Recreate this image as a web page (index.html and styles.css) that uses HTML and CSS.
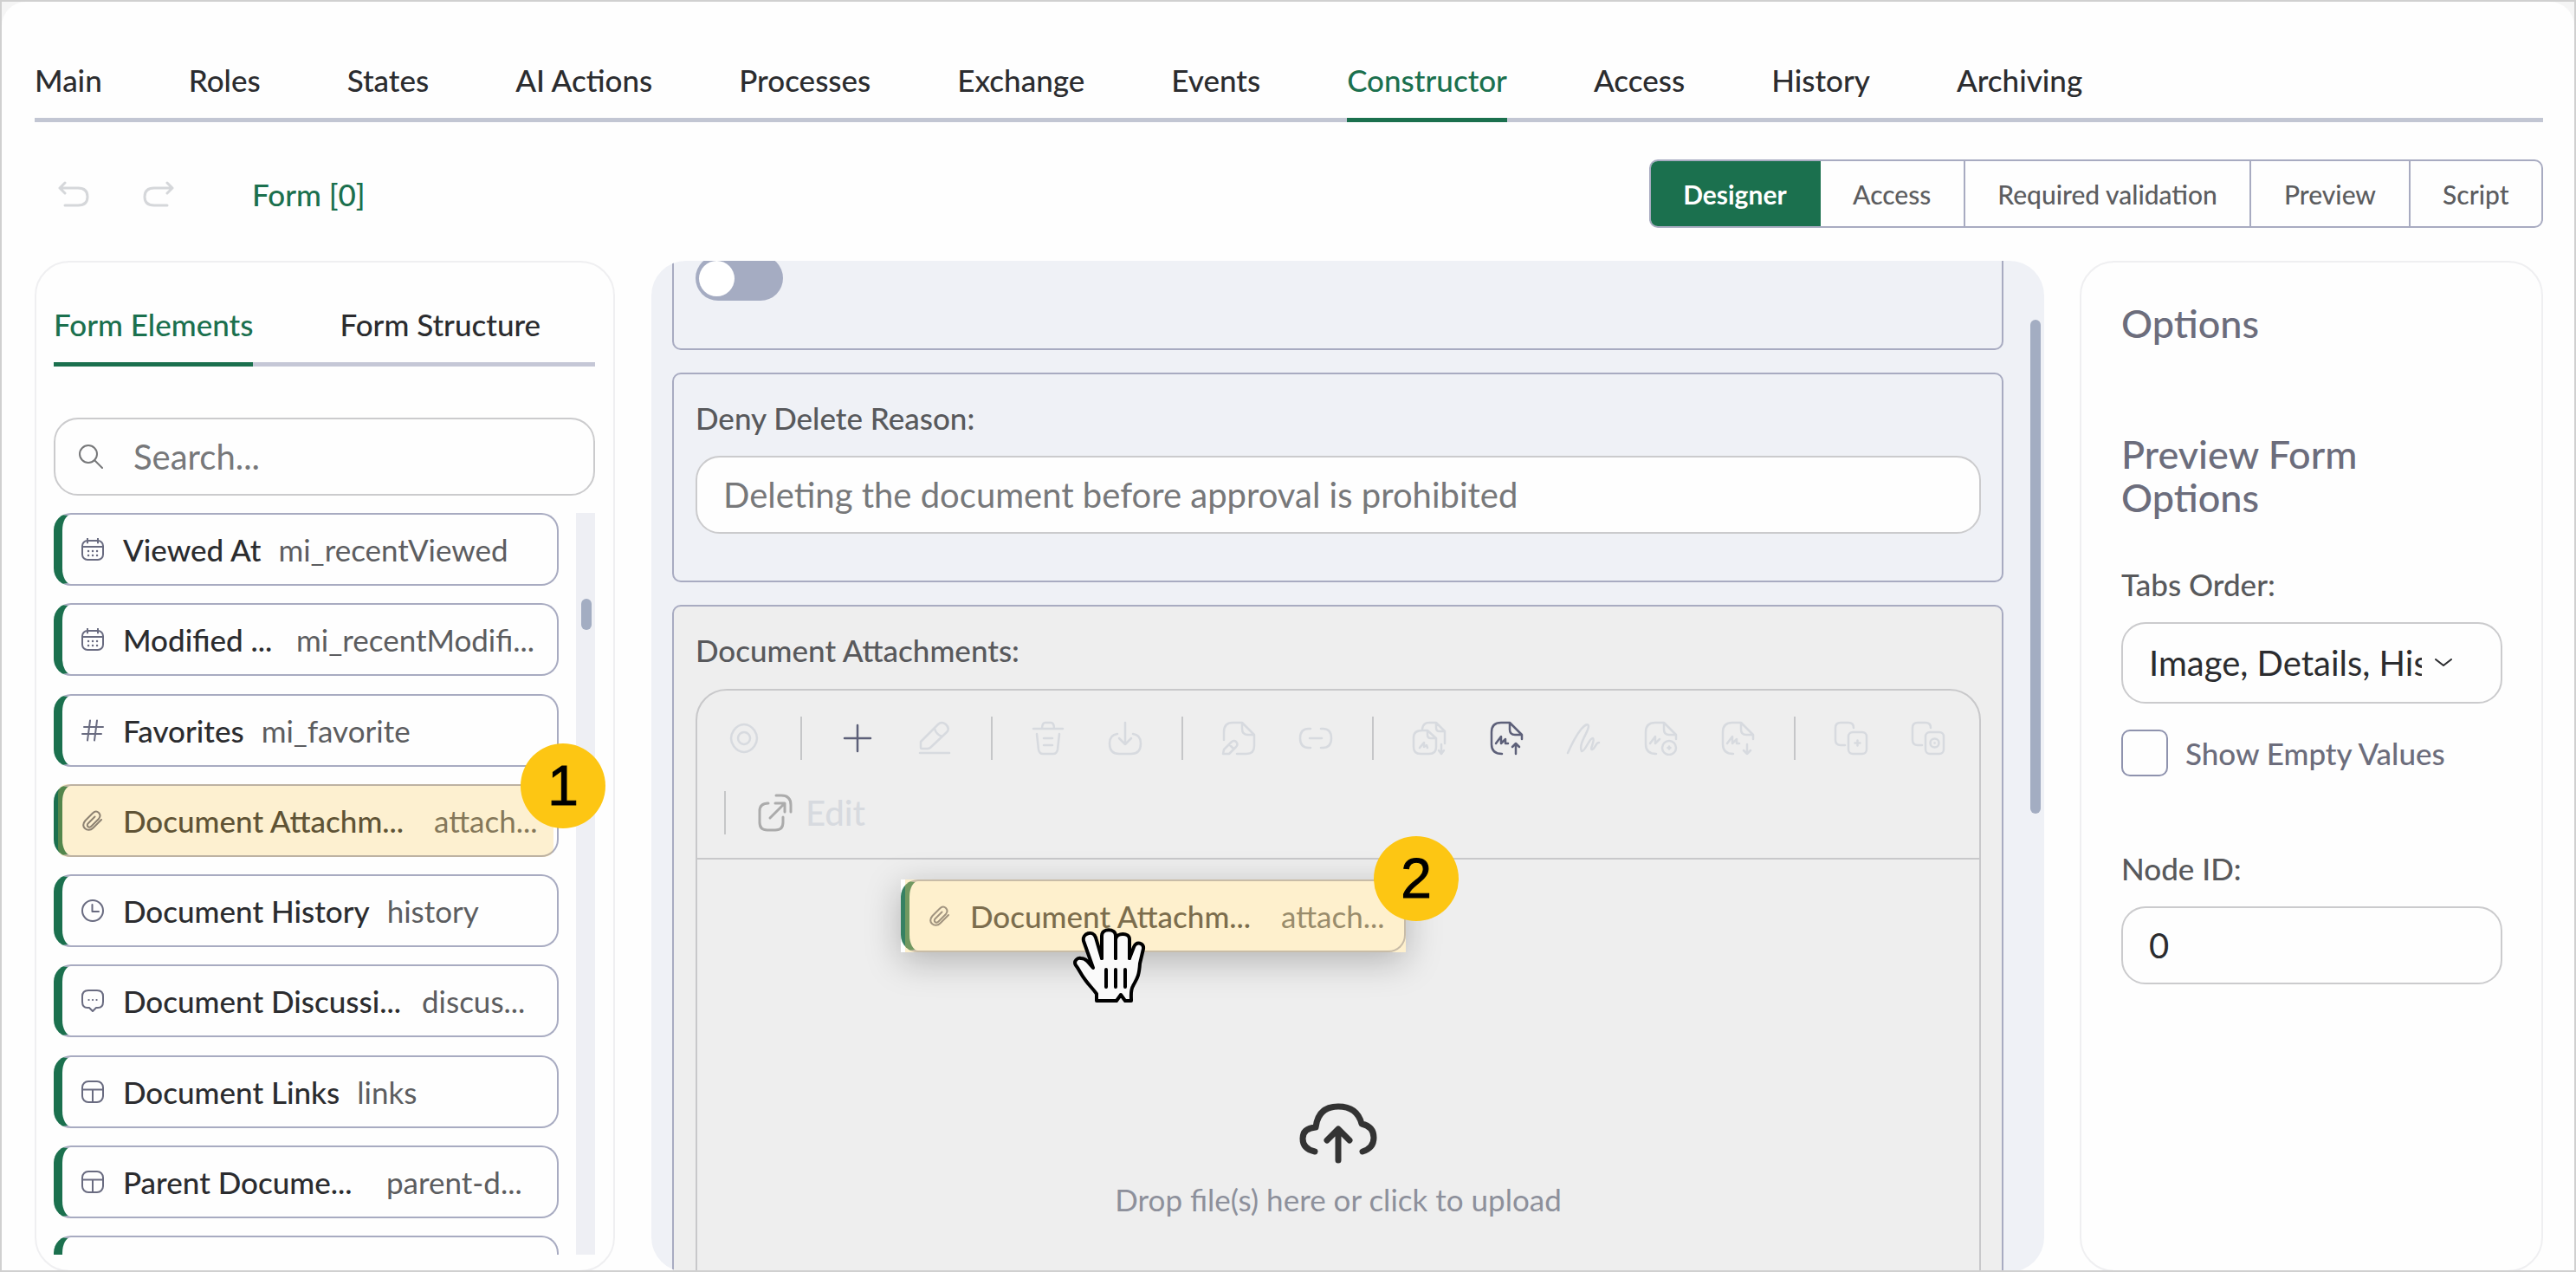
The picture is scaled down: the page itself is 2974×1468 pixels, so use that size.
FILE: index.html
```
<!DOCTYPE html>
<html lang="en">
<head>
    <meta charset="UTF-8">
    <meta name="viewport" content="width=device-width, initial-scale=1.0">
    <title>Constructor</title>
    <link rel="stylesheet" href="styles.css">
</head>
<body>
    <!-- shared icons -->
    <svg class="sprite">
        <symbol id="i-calendar" viewBox="0 0 26 26"><rect x="1" y="3" width="24" height="22" rx="6"/><path d="M1 10h24M7 .5v5M19 .5v5"/><path d="M8 15h.1M13 15h.1M18 15h.1M8 20h.1M13 20h.1M18 20h.1" stroke-width="2.4"/></symbol>
        <symbol id="i-hash" viewBox="0 0 26 26"><path d="M3 9h22M1 17h22M10 1.500L7 24.500M18 1.500l-3 23"/></symbol>
        <symbol id="i-clip" viewBox="0 0 26 26"><path d="M23 12l-9.500 9.500c-3 3-7 3-9.500.5s-2-6 .5-9L13 4.500c2.500-2.500 5-2.500 7-.5s2 4.500 0 7l-8.500 8.500c-1.500 1.500-3 1.500-4 .5s-1-2.500.5-4L15.500 8.500"/></symbol>
        <symbol id="i-clock" viewBox="0 0 26 26"><circle cx="13" cy="13" r="12"/><path d="M12.500 6v8H20"/></symbol>
        <symbol id="i-chat" viewBox="0 0 26 26"><path d="M8 1h10q7 0 7 7v6q0 7-6 7h-2l-4 4-4-4H7q-6 0-6-7V8q0-7 7-7z"/><path d="M8.500 12h.1M13 12h.1M17.500 12h.1" stroke-width="2.200"/></symbol>
        <symbol id="i-table" viewBox="0 0 26 26"><rect x="1" y="1" width="24" height="24" rx="7"/><path d="M1 10.500h24M13 10.500V25"/></symbol>
    </svg>

    <div class="page">
        <nav class="tabs">
            <a>Main</a>
            <a>Roles</a>
            <a>States</a>
            <a>AI Actions</a>
            <a>Processes</a>
            <a>Exchange</a>
            <a>Events</a>
            <a class="active">Constructor</a>
            <a>Access</a>
            <a>History</a>
            <a>Archiving</a>
        </nav>

        <div class="bar">
            <svg class="undo" viewBox="0 0 36 30"><path d="M8 2L2 8l6 6M2 8h21q11 0 11 10t-11 10H8"/></svg>
            <svg class="undo" viewBox="0 0 36 30"><path d="M28 2l6 6-6 6M34 8H13Q2 8 2 18t11 10h15"/></svg>
            <span class="crumb">Form [0]</span>
            <div class="modes">
                <button class="active">Designer</button>
                <button>Access</button>
                <button>Required validation</button>
                <button>Preview</button>
                <button>Script</button>
            </div>
        </div>

        <div class="columns">
            <aside class="panel elements">
                <nav class="tabs small">
                    <a class="active">Form Elements</a>
                    <a>Form Structure</a>
                </nav>
                <div class="search">
                    <svg viewBox="0 0 28 28"><circle cx="11" cy="11" r="10"/><path d="M18 18l9 9"/></svg>
                    <span>Search...</span>
                </div>
                <div class="list">
                    <div class="items">
                        <div class="item"><svg><use href="#i-calendar"/></svg><b>Viewed At</b><i>mi_recentViewed</i></div>
                        <div class="item"><svg><use href="#i-calendar"/></svg><b class="w-modified">Modified ...</b><i>mi_recentModifi...</i></div>
                        <div class="item"><svg><use href="#i-hash"/></svg><b>Favorites</b><i>mi_favorite</i></div>
                        <div class="item marked"><svg><use href="#i-clip"/></svg><b class="w-attach">Document Attachm...</b><i>attach...</i><span class="badge">1</span></div>
                        <div class="item"><svg><use href="#i-clock"/></svg><b>Document History</b><i>history</i></div>
                        <div class="item"><svg><use href="#i-chat"/></svg><b class="w-discuss">Document Discussi...</b><i>discus...</i></div>
                        <div class="item"><svg><use href="#i-table"/></svg><b>Document Links</b><i>links</i></div>
                        <div class="item"><svg><use href="#i-table"/></svg><b class="w-parent">Parent Docume...</b><i>parent-d...</i></div>
                        <div class="item"></div>
                    </div>
                    <div class="track"><div class="thumb"></div></div>
                </div>
            </aside>

            <main class="canvas">
                <div class="fields">
                    <section class="field first">
                        <div class="toggle"></div>
                    </section>
                    <section class="field reason">
                        <label>Deny Delete Reason:</label>
                        <div class="input">Deleting the document before approval is prohibited</div>
                    </section>
                    <section class="field attachments">
                        <label>Document Attachments:</label>
                        <div class="files">
                            <div class="toolbar">
                                <svg class="tool" viewBox="0 0 40 40"><path d="M20 4q7 0 12 7 6 9 0 18-5 7-12 7T8 29q-6-9 0-18 5-7 12-7z"/><circle cx="20" cy="20" r="7"/></svg>
                                <span class="sep"></span>
                                <svg class="tool on" viewBox="0 0 40 40"><path d="M20 5v30M5 20h30"/></svg>
                                <svg class="tool" viewBox="0 0 40 40"><path d="M3 37h34M4 31V24L24 4q4-4 9 0 5 5 1 9L16 30q-2 2-4 2H5q-1 0-1-1M20 9q2 7 9 9"/></svg>
                                <span class="sep"></span>
                                <svg class="tool" viewBox="0 0 40 40"><path d="M3 9h34M13 9q0-7 4-7h6q4 0 4 7M7 15l2 18q1 5 5 5h12q4 0 5-5l2-18M15 20h10M15 28h10"/></svg>
                                <svg class="tool" viewBox="0 0 40 40"><path d="M20 2v25M13 20l7 7 7-7M11 15q-9 1-9 11 0 12 11 12h14q11 0 11-12 0-10-9-11"/></svg>
                                <span class="sep"></span>
                                <svg class="tool" viewBox="0 0 40 40"><path d="M3 22V13Q3 2 13 2h11l14 14v13q0 9-9 9H18M24 2v7q0 7 7 7h7M3 33l9-9q3-2 5 0 3 3 0 6l-8 8H2zM9 27l5 5"/></svg>
                                <svg class="tool" viewBox="0 0 40 40"><path d="M14 9h-2Q2 9 2 20t10 11h2M26 9h2q10 0 10 11T28 31h-2M13 20h14"/></svg>
                                <span class="sep"></span>
                                <svg class="tool" viewBox="0 0 40 40"><path d="M12 9q1-7 8-7h8l10 10v14M28 2v6q0 4 4 4h6M18 11h-6Q2 11 2 19v11q0 8 8 8h10q8 0 8-8V20zM18 11v5q0 4 4 4h6M9 31l5-6v5l3-2 1 3M34 27v10M31 34l3 4 3-4"/></svg>
                                <svg class="tool on" viewBox="0 0 40 40"><path d="M15 38Q3 38 3 27V13Q3 2 14 2h10l14 14v5M24 2v8q0 6 6 6h8M8 26l6-8v8l5-5v5h3M31 38V26M27 30l4-4 4 4"/></svg>
                                <svg class="tool" viewBox="0 0 40 40"><path d="M2 37Q10 19 17 10q8-9 9-4c0 7-12 20-8 29 4 1 9-16 13-15 3 2-4 13-1 13 4-1 4-8 8-8"/></svg>
                                <svg class="tool" viewBox="0 0 40 40"><path d="M15 38Q3 38 3 27V13Q3 2 14 2h10l14 14v5M24 2v8q0 6 6 6h8M8 26l6-8v8l5-5"/><circle cx="30" cy="31" r="8"/><path d="M30 29.500v3M28.500 31h3"/></svg>
                                <svg class="tool" viewBox="0 0 40 40"><path d="M15 38Q3 38 3 27V13Q3 2 14 2h10l14 14v5M24 2v8q0 6 6 6h8M8 26l6-8v8l5-5v5h3M31 27v11M27 34l4 4 4-4"/></svg>
                                <span class="sep"></span>
                                <svg class="tool" viewBox="0 0 40 40"><path d="M23 8q0-6-6-6H8Q2 2 2 8v14q0 6 6 6h5"/><rect x="17" y="13" width="21" height="25" rx="5"/><path d="M27.500 22.500v6M24.500 25.500h6"/></svg>
                                <svg class="tool" viewBox="0 0 40 40"><path d="M23 8q0-6-6-6H8Q2 2 2 8v14q0 6 6 6h5"/><rect x="17" y="13" width="21" height="25" rx="5"/><circle cx="27.500" cy="25.500" r="5"/><path d="M27.500 25.500h.1"/></svg>
                            </div>
                            <div class="toolbar second">
                                <span class="sep"></span>
                                <svg class="open" viewBox="0 0 40 44"><path d="M12 11q-10 0-10 9v13q0 9 9 9h9q9 0 9-9v-6M14 28l16-16M20 11h11v10M21 2h6q11 0 11 11v8"/></svg>
                                <span class="edit">Edit</span>
                            </div>
                            <div class="drop">
                                <svg class="cloud" viewBox="0 0 90 70"><path d="M18 56Q4 53 4 41 4 29 19 28 22 4 45 4q22 0 27 20 14 3 14 16 0 12-13 16M45 66V31M32 43l13-13 13 13"/></svg>
                                <p>Drop file(s) here or click to upload</p>
                            </div>

                            <div class="drag">
                                <div class="item marked"><svg><use href="#i-clip"/></svg><b class="w-attach">Document Attachm...</b><i>attach...</i></div>
                                <span class="badge">2</span>
                                <svg class="hand" viewBox="0 0 86 88">
                                    <path d="M28 84v-8C23 69 20 67 15 60 9 52 8 48 4 43 1 38 6 34 10 35q4 0 7 3l7 8L13 15c-2-9 11-13 14-4l7 24V9c0-9 16-9 16 0v26V13c1-8 16-8 16 0v22l5-13c3-7 12-5 11 2l-4 17c-1 16-4 18-8 26-3 5-2 10-2 17h-7l-5-7-5 7z"/>
                                    <path d="M34 20v15M50 20v15M66 22v13M39 48v20M50 48v20M61 48v20"/>
                                </svg>
                            </div>
                        </div>
                    </section>
                </div>
                <div class="canvas-thumb"></div>
            </main>

            <aside class="panel options">
                <h2>Options</h2>
                <h2 class="preview">Preview Form Options</h2>
                <label>Tabs Order:</label>
                <div class="input select">
                    <span>Image, Details, History</span>
                    <svg viewBox="0 0 20 10"><path d="M1 1l9 7 9-7"/></svg>
                </div>
                <div class="check"><span class="box"></span>Show Empty Values</div>
                <label>Node ID:</label>
                <div class="input node">0</div>
            </aside>
        </div>
    </div>
</body>
</html>
```
FILE: styles.css
```
* {
    box-sizing: border-box;
}
body {
    height: 1468px;
    margin: 0;
    border: 2px solid #d0d0d0;
    background-color: #f5f5f5;
    font-family: Lato, sans-serif;
    font-size: 35px;
    color: #2b2c2f;
    overflow: hidden;
}
.sprite {
    display: none;
}
svg {
    fill: none;
    stroke: currentColor;
    stroke-linecap: round;
    stroke-linejoin: round;
    stroke-width: 2;
    flex-shrink: 0;
}
.page {
    height: 1464px;
    padding: 0 36px 0 38px;
    border-radius: 28px 28px 0 0;
    background-color: #fefefe;
    overflow: hidden;
}

/* tabs */
.tabs {
    display: flex;
    gap: 100px;
    height: 139px;
    padding-top: 67px;
    line-height: 46px;
    font-weight: 500;
    border-bottom: 5px solid #c2c6d3;
}
.tabs a {
    height: 72px;
    white-space: nowrap;
}
.tabs .active {
    color: #1b704e;
    border-bottom: 5px solid #1b704e;
}
.tabs.small {
    height: 120px;
    padding-top: 48px;
    border-color: #c5c7d6;
}

/* toolbar under the tabs */
.bar {
    display: flex;
    align-items: center;
    height: 79px;
    margin: 43px 0 38px;
    padding-left: 27px;
}
.undo {
    width: 36px;
    height: 30px;
    margin-right: 62px;
    color: #d5d7da;
    stroke-width: 3;
}
.crumb {
    margin-left: 28px;
    color: #1b704e;
    font-weight: 500;
}
.modes {
    display: flex;
    height: 79px;
    margin-left: auto;
    border: 2px solid #a8abc1;
    border-radius: 10px;
    overflow: hidden;
}
.modes button {
    padding: 0 37.500px;
    border: 0;
    border-left: 2px solid #a8abc1;
    background: none;
    font: 500 30px Lato, sans-serif;
    color: #5c5d60;
}
.modes .active {
    margin: -2px 0 -2px -2px;
    padding: 0 39px;
    border: 0;
    background-color: #1b704e;
    color: #fff;
    font-weight: 700;
}
.modes .active + button {
    border-left: 0;
}

.columns {
    display: flex;
}
.panel {
    height: 1167px;
    border: 2px solid #efeff1;
    border-radius: 40px;
}

/* left panel */
.elements {
    width: 670px;
    margin-right: 42px;
    padding: 0 21px 0 20px;
}
.search {
    display: flex;
    align-items: center;
    height: 90px;
    margin-top: 59px;
    padding-left: 27px;
    border: 2px solid #cbcbcd;
    border-radius: 28px;
    font-size: 40px;
    color: #77787a;
}
.search svg {
    width: 28px;
    height: 28px;
    margin-right: 35px;
}
.list {
    display: flex;
    justify-content: space-between;
    height: 856px;
    margin-top: 20px;
}
.items {
    width: 583px;
    clip-path: inset(0 -60px 0 0);
}
.item {
    position: relative;
    display: flex;
    align-items: center;
    width: 583px;
    height: 84px;
    margin-bottom: 20.300px;
    padding-left: 22px;
    border: 2px solid #a8abc1;
    border-left: 10px solid #1b704e;
    border-radius: 20px;
    white-space: nowrap;
}
.item svg {
    width: 26px;
    height: 26px;
    margin-right: 22px;
    color: #696b80;
}
.item b {
    font-weight: 500;
    margin-right: 20px;
}
.item i {
    font-style: normal;
    color: #5c5d60;
}
/* translucent highlight lies over the whole row */
.marked::before {
    content: "";
    position: absolute;
    top: -2px;
    right: 4px;
    bottom: -2px;
    left: -5px;
    border-radius: 10px;
    background-color: rgba(253, 199, 71, 0.25);
}
.w-modified {
    width: 180px;
}
.w-attach {
    width: 339px;
}
.w-discuss {
    width: 325px;
}
.w-parent {
    width: 284px;
}
.badge {
    position: absolute;
    top: -49px;
    right: -56px;
    width: 98px;
    height: 98px;
    border-radius: 50%;
    background-color: #fdc613;
    color: #000;
    font: 64px/98px "Liberation Sans", sans-serif;
    text-align: center;
    -webkit-text-stroke: 1px #000;
}
.track {
    width: 22px;
    padding: 99px 4px 0 6px;
    background-color: #eeeff4;
}
.thumb {
    height: 36px;
    border-radius: 6px;
    background-color: #a3adc2;
}

/* form canvas */
.canvas {
    position: relative;
    width: 1608px;
    height: 1167px;
    margin-right: 41px;
    border-radius: 40px;
    background-color: #eff1f6;
    overflow: hidden;
}
.fields {
    width: 1537px;
    margin-left: 24px;
}
.field {
    display: flow-root;
    margin-bottom: 26px;
    padding: 0 24px 0 25px;
    border: 2px solid #a8abc1;
    border-radius: 10px;
}
.first {
    height: 103px;
    border-top: 0;
    border-radius: 0 0 10px 10px;
}
.toggle {
    width: 101px;
    height: 52px;
    margin-top: -6px;
    padding: 6px 4px;
    border-radius: 26px;
    background-color: #a5acc2;
}
.toggle::before {
    content: "";
    display: block;
    width: 41px;
    height: 41px;
    border-radius: 50%;
    background-color: #fff;
}
label {
    display: block;
    line-height: 46px;
    color: #58595c;
    font-weight: 500;
}
.reason {
    height: 242px;
    padding-top: 27px;
}
.input {
    height: 90px;
    margin-top: 21px;
    padding-left: 30px;
    border: 2px solid #cbcbcd;
    border-radius: 28px;
    background-color: #fefefe;
    font-size: 40px;
    line-height: 86px;
    color: #77787a;
}
.attachments {
    height: 800px;
    padding-top: 27px;
    background-color: #eee;
}
.files {
    position: relative;
    height: 720px;
    margin-top: 22px;
    border: 2px solid #c8c8ca;
    border-radius: 36px;
}
.toolbar {
    display: flex;
    align-items: center;
    height: 110px;
    padding-left: 34px;
    color: #d7dadf;
}
.toolbar.second {
    height: 85px;
    padding: 0 0 21px 31px;
    border-bottom: 2px solid #c8c8ca;
}
.tool {
    width: 40px;
    height: 40px;
    margin-right: 49px;
    stroke-width: 2.500;
}
.tool.on {
    color: #5d6079;
}
.sep {
    flex-shrink: 0;
    width: 2px;
    height: 50px;
    margin: 0 44px 0 -4px;
    background-color: #c5c6c8;
}
.second .sep {
    margin: 0 37px 0 0;
}
.open {
    width: 40px;
    height: 44px;
    margin-right: 15px;
    color: #ababab;
    stroke-width: 3;
}
.edit {
    font-size: 40px;
    font-weight: 500;
}
.drop {
    display: flex;
    flex-direction: column;
    align-items: center;
    padding-top: 281px;
    color: #8d909b;
}
.drop p {
    margin: 20px 0 0;
}
.cloud {
    width: 90px;
    height: 70px;
    color: #333;
    stroke-width: 7;
}

/* dragged element */
.drag {
    position: absolute;
    left: 235px;
    top: 218px;
    width: 583px;
    height: 84px;
    background-color: #fff;
    box-shadow: 0 10px 40px rgba(0, 0, 0, 0.25);
}
.drag .item {
    opacity: 0.88;
}
.drag .marked::before {
    right: -2px;
    border-radius: 0;
    background-color: rgba(253, 199, 71, 0.3);
}
.drag .badge {
    top: -50px;
    right: -61px;
}
.hand {
    position: absolute;
    left: 198px;
    top: 56px;
    width: 86px;
    height: 88px;
    color: #000;
    fill: #fafafa;
    stroke-width: 4;
}
.canvas-thumb {
    position: absolute;
    right: 4px;
    top: 68px;
    width: 12px;
    height: 570px;
    border-radius: 6px;
    background-color: #a3adc2;
}

/* right panel */
.options {
    width: 535px;
    padding: 0 45px 0 46px;
}
.options h2 {
    margin: 45px 0 0;
    font-size: 45px;
    line-height: 50px;
    font-weight: 500;
    color: #6c6d7c;
}
.options .preview {
    width: 300px;
    margin: 101px 0 52px;
}
.options .input {
    color: #2b2c2f;
}
.options .select {
    display: flex;
    align-items: center;
    height: 94px;
}
.select span {
    width: 315px;
    overflow: hidden;
    white-space: nowrap;
}
.select svg {
    width: 20px;
    height: 10px;
    margin-left: 15px;
}
.check {
    display: flex;
    align-items: center;
    gap: 20px;
    margin: 30px 0 83px;
    color: #6c6d7c;
    font-weight: 500;
}
.box {
    width: 54px;
    height: 54px;
    border: 2px solid #8f93ae;
    border-radius: 10px;
}
```
